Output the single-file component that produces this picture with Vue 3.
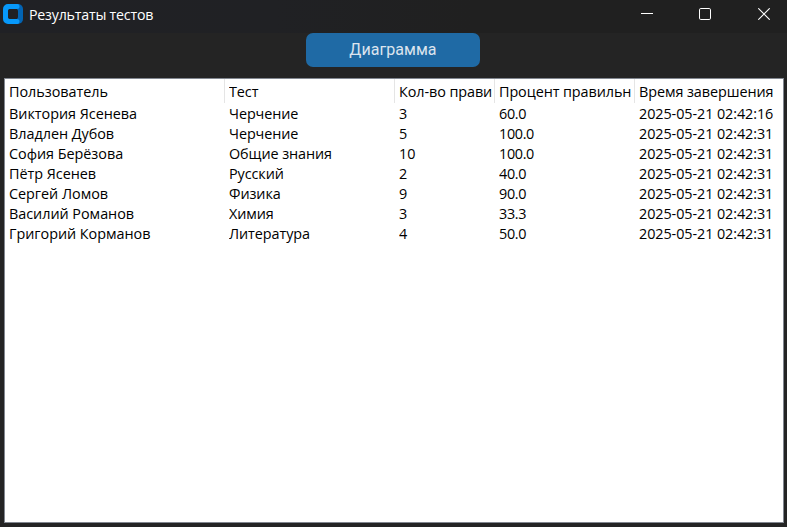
<script setup>
const columns = [
  { key: 'user', title: 'Пользователь' },
  { key: 'test', title: 'Тест' },
  { key: 'correct', title: 'Кол-во прави' },
  { key: 'percent', title: 'Процент правильн' },
  { key: 'time', title: 'Время завершения' }
]
const rows = [
  ['Виктория Ясенева', 'Черчение', '3', '60.0', '2025-05-21 02:42:16'],
  ['Владлен Дубов', 'Черчение', '5', '100.0', '2025-05-21 02:42:31'],
  ['София Берёзова', 'Общие знания', '10', '100.0', '2025-05-21 02:42:31'],
  ['Пётр Ясенев', 'Русский', '2', '40.0', '2025-05-21 02:42:31'],
  ['Сергей Ломов', 'Физика', '9', '90.0', '2025-05-21 02:42:31'],
  ['Василий Романов', 'Химия', '3', '33.3', '2025-05-21 02:42:31'],
  ['Григорий Корманов', 'Литература', '4', '50.0', '2025-05-21 02:42:31']
]
</script>

<template>
  <div class="window">
    <header class="titlebar">
      <svg class="logo" width="20" height="20" viewBox="0 0 20 20">
        <path d="M14 0h1a5 5 0 0 1 5 5v10a5 5 0 0 1-5 5h-1z" fill="#0264b4" />
        <path d="M5 0h9.5a2.5 2.5 0 0 1 2 2.5a2.5 2.5 0 0 1-2.5 2.5H8a3 3 0 0 0-3 3v4a3 3 0 0 0 3 3h6a2.5 2.5 0 0 1 2.5 2.5a2.5 2.5 0 0 1-2 2.5H5a5 5 0 0 1-5-5V5a5 5 0 0 1 5-5z" fill="#0799fb" />
        <rect x="5" y="5" width="10" height="10" rx="2" fill="#202125" />
      </svg>
      <span class="title">Результаты тестов</span>
      <div class="controls">
        <svg width="12" height="12" viewBox="0 0 12 12"><path d="M0 5.5h12" stroke="#fff" /></svg>
        <svg width="12" height="12" viewBox="0 0 12 12"><rect x=".5" y=".5" width="11" height="11" rx="1.3" fill="none" stroke="#fff" /></svg>
        <svg width="12" height="12" viewBox="0 0 12 12"><path d="M.3.3l11.4 11.4M11.7.3L.3 11.7" stroke="#fff" stroke-width="1.1" /></svg>
      </div>
    </header>
    <button class="chart">Диаграмма</button>
    <main class="table">
      <div class="row head">
        <div v-for="c in columns" :key="c.key" class="cell" :class="c.key"><span>{{ c.title }}</span></div>
      </div>
      <div v-for="(r, i) in rows" :key="i" class="row">
        <div v-for="(v, j) in r" :key="j" class="cell" :class="columns[j].key"><span>{{ v }}</span></div>
      </div>
    </main>
  </div>
</template>

<style>
body { margin: 0; background: #242424; }
</style>

<style scoped>
.window {
  box-sizing: border-box;
  width: 787px;
  height: 527px;
  display: flex;
  flex-direction: column;
  align-items: center;
  background: #242424;
  font-family: "Open Sans", "Noto Sans", sans-serif;
  font-size: 14.4px;
  overflow: hidden;
}
.titlebar {
  box-sizing: border-box;
  width: 100%;
  height: 33px;
  flex: none;
  display: flex;
  padding: 4px 17px 0 3px;
  background: linear-gradient(90deg, #202125, #202124 35%, #202020 60%);
  color: #fff;
}
.title { margin-left: 6px; line-height: 22px; font-size: 14.2px; letter-spacing: -0.2px; }
.controls { margin-left: auto; display: flex; gap: 46px; padding-top: 4px; }
.controls svg { display: block; }
.controls svg:nth-child(2) { margin-right: 1px; }
.chart {
  flex: none;
  width: 174px;
  height: 34px;
  margin: 0 1px 11px 0;
  padding: 0;
  border: 0;
  border-radius: 7px;
  background: #1f6aa5;
  color: #dce4ee;
  font: 16px/32px Roboto, sans-serif;
  letter-spacing: 0.05px;
}
.table {
  box-sizing: border-box;
  width: 780px;
  height: 445px;
  flex: none;
  margin-left: 1px;
  border: 1px solid #828790;
  background: #fff;
  color: #000;
}
.row {
  display: grid;
  grid-template-columns: 220px 170px 100px 140px 148px;
  height: 20px;
  line-height: 20px;
}
.head { height: 25px; line-height: 26px; }
.cell { box-sizing: border-box; min-width: 0; padding: 0 3px 0 4px; white-space: nowrap; letter-spacing: -0.08px; }
.user { letter-spacing: -0.03px; }
.row:not(.head) .percent { letter-spacing: -0.35px; }
.head .cell { height: 24px; border-right: 1px solid #e5e5e5; padding-right: 2px; }
.head .cell:last-child { border-right: 0; }
.cell span { display: block; overflow: hidden; }
</style>
